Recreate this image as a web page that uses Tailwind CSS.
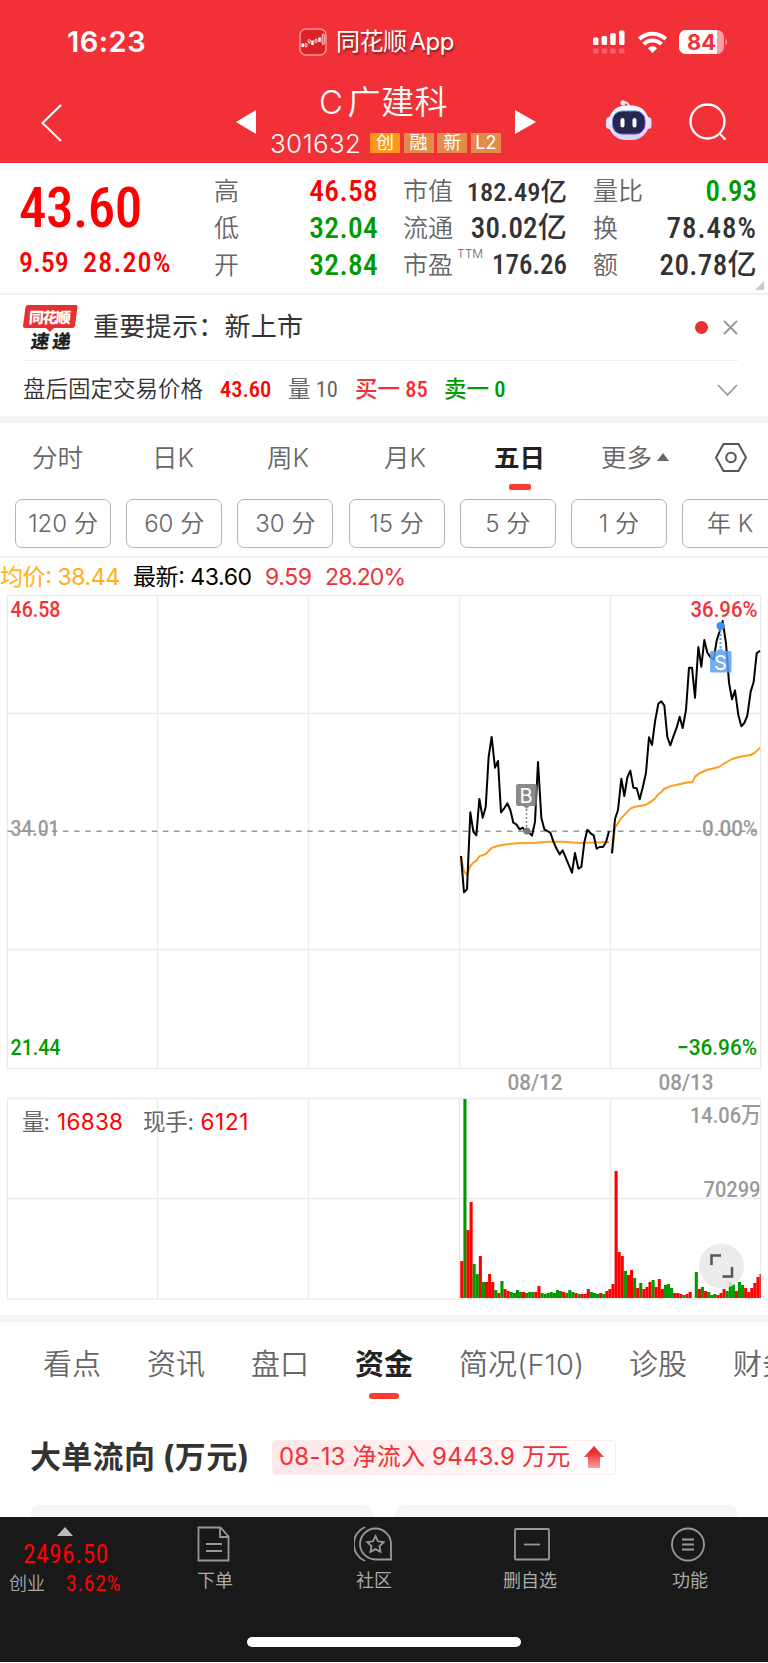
<!DOCTYPE html>
<html lang="zh-CN">
<head>
    <meta charset="UTF-8">
    <meta name="viewport" content="width=device-width, initial-scale=1.0">
    <title>C广建科 301632</title>
    <script src="https://cdn.jsdelivr.net/npm/@tailwindcss/browser@4"></script>
</head>
<body class="w-[768px] h-[1663px] overflow-hidden bg-white text-[#666] font-['Roboto','Noto_Sans_CJK_SC',sans-serif]">
    <!-- Header -->
    <header class="h-[163px] bg-[#f23037] text-white">
        <div class="h-[78px] pt-[6px] flex items-center relative">
            <div class="ml-[67px] w-[232px] font-['Inter'] font-semibold text-[29px] tracking-[0.5px]">16:23</div>
            <svg class="w-[28px] h-[28px]" viewBox="0 0 28 28" fill="none">
                <rect x="1" y="1" width="26" height="26" rx="6" fill="#dc2228" stroke="#ff9397" stroke-width="1.5"/>
                <path d="M3.800 15.500v3.500M13.500 12.500v4.500M20.500 9.500v4.500" stroke="#fff" stroke-width="2.500"/>
                <g stroke="#fff" stroke-width=".9"><rect x="6" y="15.500" width="2" height="3.500" rx="1"/><rect x="9.200" y="11.500" width="2" height="3.500" rx="1"/><rect x="16" y="11" width="2" height="3.500" rx="1"/><rect x="23.200" y="6" width="2" height="10.500" rx="1"/></g>
            </svg>
            <div class="ml-[9px] text-[24px] font-['Inter','Noto_Sans_CJK_SC',sans-serif] tracking-[-0.5px] whitespace-nowrap [text-shadow:1px_2px_2px_rgba(0,0,0,.45)]">同花顺<span class="ml-[3px]">App</span></div>
            <svg class="absolute left-[592px] top-[28px]" width="140" height="28" viewBox="0 0 140 28" fill="none">
                <g fill="#fff">
                    <rect x="1" y="9.500" width="5.500" height="7.500" rx="1.500"/><rect x="9.600" y="8" width="5.500" height="9" rx="1.500"/><rect x="18.200" y="5" width="5.500" height="12" rx="1.500"/><rect x="27" y="2.500" width="5.500" height="14.500" rx="1.500"/>
                    <g opacity=".25"><rect x="1" y="20.500" width="5.500" height="5" rx="1.500"/><rect x="9.600" y="20.500" width="5.500" height="5" rx="1.500"/><rect x="18.200" y="20.500" width="5.500" height="5" rx="1.500"/><rect x="27" y="20.500" width="5.500" height="5" rx="1.500"/></g>
                    <path d="M60.500 25l-4.600-4.800a6.500 6.500 0 0 1 9.200 0z"/>
                </g>
                <path d="M51.600 16.200a12.600 12.600 0 0 1 17.800 0M47.300 11a19 19 0 0 1 26.400 0" stroke="#fff" stroke-width="4"/>
                <rect x="87" y="2" width="45" height="24" rx="7" fill="#ff9da0"/>
                <path d="M94 2h31v24H94a7 7 0 0 1-7-7V9a7 7 0 0 1 7-7z" fill="#fff"/>
                <path d="M133.500 10.500a4.500 4.500 0 0 1 0 7z" fill="#ff9da0"/>
                <text x="95" y="21.800" font-family="Inter" font-weight="700" font-size="21.500" fill="#f23037" textLength="29" lengthAdjust="spacingAndGlyphs">84</text>
            </svg>
        </div>
        <div class="h-[85px] flex items-start">
            <svg class="ml-[40px] mt-[26px]" width="23" height="38" viewBox="0 0 23 38" fill="none" stroke="#fff" stroke-width="2"><path d="M21 1L2.500 19 21 37"/></svg>
            <svg class="ml-[172px] mt-[31px]" width="22" height="26" viewBox="0 0 22 26" fill="#fff"><path d="M21 1v24L1 13z"/></svg>
            <div class="ml-[13px] w-[244px] font-['Inter','Noto_Sans_CJK_SC',sans-serif]">
                <h1 class="mt-[5px] ml-[49px] text-[33px] leading-[38px] font-[350] tracking-[0.5px] whitespace-nowrap">C<span class="ml-[4px]">广建科</span></h1>
                <div class="mt-[8px] flex items-center h-[28px]">
                    <span class="w-[100px] text-[26px] tracking-[0.300px] font-[350]">301632</span>
                    <div class="flex gap-[3.600px] text-[18px] text-white leading-[20px] text-center">
                        <span class="w-[30px] h-[20px] bg-[#ff981a]">创</span>
                        <span class="w-[30px] h-[20px] bg-[#e38b48]">融</span>
                        <span class="w-[30px] h-[20px] bg-[#e38b48]">新</span>
                        <span class="w-[30px] h-[20px] bg-[#e38b48]">L2</span>
                    </div>
                </div>
            </div>
            <svg class="mt-[31px]" width="22" height="26" viewBox="0 0 22 26" fill="#fff"><path d="M1 1v24l21-12z"/></svg>
            <svg class="ml-[70px] mt-[21px]" width="46" height="44" viewBox="0 0 46 44">
                <defs>
                    <linearGradient id="shell" x2="0" y2="1"><stop offset="0" stop-color="#fff"/><stop offset="1" stop-color="#cfd3f5"/></linearGradient>
                    <linearGradient id="rim" x2="1" y2="1"><stop offset="0" stop-color="#4fc3ff"/><stop offset=".5" stop-color="#6b46df"/><stop offset="1" stop-color="#7a2cff"/></linearGradient>
                </defs>
                <circle cx="17" cy="3.800" r="2.600" fill="#e8e8fb"/><path d="M17 3.500q6-1 6 5" stroke="#e8e8fb" stroke-width="2" fill="none"/>
                <rect x="0" y="18" width="7" height="12" rx="3.500" fill="#dfe1fa"/><rect x="38.500" y="18" width="7" height="12" rx="3.500" fill="#dfe1fa"/>
                <rect x="2.500" y="6.500" width="40.500" height="34.500" rx="17" fill="url(#shell)"/>
                <rect x="6.500" y="12" width="32.500" height="23" rx="9.500" fill="#24284f" stroke="url(#rim)" stroke-width="1"/>
                <rect x="14.500" y="19" width="4" height="9.500" rx="2" fill="#fff"/><rect x="26.500" y="19" width="4" height="9.500" rx="2" fill="#fff"/>
            </svg>
            <svg class="ml-[36px] mt-[24px]" width="40" height="40" viewBox="0 0 40 40" fill="none" stroke="#fff" stroke-width="2.300"><circle cx="19.500" cy="19.500" r="17"/><path d="M31 31l6.500 6.500"/></svg>
        </div>
    </header>

    <!-- Quote -->
    <section class="h-[132px] border-b-2 border-[#f1f1f1] flex relative font-stretch-condensed">
        <div class="w-[214px] pl-[19px] text-[#f00] font-medium whitespace-nowrap">
            <div class="mt-[14px] text-[55px] leading-[62px] tracking-[-0.500px]">43.60</div>
            <div class="mt-[8px] text-[28px] leading-[32px] flex"><span class="w-[64px]">9.59</span><span class="tracking-[1.200px]">28.20%</span></div>
        </div>
        <div class="w-[164px] pt-[10px] text-[29.500px] leading-[37px] font-medium">
            <div class="flex justify-between"><span class="text-[25px] font-[350] text-[#666]">高</span><span class="text-[#f00] tracking-[0.300px]">46.58</span></div>
            <div class="flex justify-between"><span class="text-[25px] font-[350] text-[#666]">低</span><span class="text-[#090] tracking-[0.300px]">32.04</span></div>
            <div class="flex justify-between"><span class="text-[25px] font-[350] text-[#666]">开</span><span class="text-[#090] tracking-[0.300px]">32.84</span></div>
        </div>
        <div class="ml-[25px] w-[164px] pt-[10px] text-[29px] leading-[37px] font-medium text-[#333]">
            <div class="h-[37px] flex justify-between whitespace-nowrap"><span class="text-[25px] font-[350] text-[#666]">市值</span><span class="text-[26.500px]">182.49亿</span></div>
            <div class="h-[37px] flex justify-between whitespace-nowrap"><span class="text-[25px] font-[350] text-[#666]">流通</span><span class="tracking-[0.200px]">30.02亿</span></div>
            <div class="h-[37px] flex justify-between whitespace-nowrap"><span class="text-[25px] font-[350] text-[#666] relative">市盈<i class="absolute left-[54px] -top-[12px] not-italic text-[12px] font-['Inter']">TTM</i></span><span class="text-[27px]">176.26</span></div>
        </div>
        <div class="ml-[26px] w-[164px] pt-[10px] text-[29px] leading-[37px] font-medium text-[#333]">
            <div class="flex justify-between"><span class="text-[25px] font-[350] text-[#666]">量比</span><span class="text-[#090]">0.93</span></div>
            <div class="flex justify-between"><span class="text-[25px] font-[350] text-[#666]">换</span><span class="tracking-[1px]">78.48%</span></div>
            <div class="flex justify-between"><span class="text-[25px] font-[350] text-[#666]">额</span><span class="tracking-[0.400px]">20.78亿</span></div>
        </div>
        <svg class="absolute right-[4px] bottom-[3px]" width="9" height="9" viewBox="0 0 9 9" fill="#ccc"><path d="M9 0v9H0z"/></svg>
    </section>

    <!-- Notice -->
    <section class="mx-[23px] h-[65px] flex items-center text-[#333]">
        <svg class="overflow-visible" width="55" height="46" viewBox="0 0 55 46" font-family="Noto Sans CJK SC" font-weight="900">
            <path d="M5 0h48q2 0 1.500 2L52 21q-.5 2-2.500 2H31l-4 4-4-4H2q-2 0-2-2L2.500 2Q3 0 5 0z" fill="#e93030"/>
            <text transform="translate(5.500 17.500) skewX(-4)" font-size="15" fill="#fff" textLength="42">同花顺</text>
            <text transform="translate(7 43) skewX(-8)" font-size="18.500" fill="#222" textLength="40">速递</text>
        </svg>
        <div class="ml-[15px] text-[26px] tracking-[0.300px]">重要提示：新上市</div>
        <i class="ml-auto w-[13px] h-[13px] rounded-full bg-[#e93030]"></i>
        <svg class="ml-[15px] mr-[7px]" width="15" height="15" viewBox="0 0 15 15" stroke="#999" stroke-width="2"><path d="M1 1l13 13M14 1L1 14"/></svg>
    </section>
    <section class="h-[56px] ml-[23px] mr-[30px] pt-[3px] flex items-center text-[22.500px] whitespace-nowrap border-t border-[#eee] font-stretch-condensed">
        <span class="w-[197px] text-[#333] font-[350]">盘后固定交易价格</span>
        <span class="w-[68px] text-[#f00] font-medium">43.60</span>
        <span class="w-[67px]">量 10</span>
        <span class="w-[89px] text-[#f23037] font-medium">买一 85</span>
        <span class="text-[#090] font-medium">卖一 0</span>
        <svg class="ml-auto" width="21" height="12" viewBox="0 0 21 12" fill="none" stroke="#999" stroke-width="1.800"><path d="M1 1l9.500 10L20 1"/></svg>
    </section>

    <!-- Period tabs -->
    <nav class="h-[83px] border-t-[7px] border-[#f4f4f4] text-[25.500px] flex items-start pt-[16px] leading-[38px] whitespace-nowrap font-['Inter','Noto_Sans_CJK_SC',sans-serif] font-[350]">
        <span class="ml-[32px] w-[120px]">分时</span>
        <span class="w-[115px]">日K</span>
        <span class="w-[117px]">周K</span>
        <span class="w-[110px]">月K</span>
        <span class="w-[107px] font-bold text-[#222] relative">五日<i class="absolute left-[15px] top-[45px] w-[22px] h-[6px] rounded-[2px] bg-[#fb3a30]"></i></span>
        <span class="w-[56px]">更多</span>
        <svg class="mt-[14px]" width="12" height="8" viewBox="0 0 12 8" fill="#666"><path d="M6 0l6 8H0z"/></svg>
        <svg class="ml-[46px] mt-[4px]" width="32" height="29" viewBox="0 0 32 29" fill="none" stroke="#555" stroke-width="2"><path d="M8.500 1h15L31 14.500 23.500 28h-15L1 14.500z"/><circle cx="16" cy="14.500" r="4.800"/></svg>
    </nav>
    <div class="h-[59px] pl-[15px] flex gap-[15.200px] border-b-2 border-[#f1f1f1] text-[24px] font-[350] [word-spacing:-4px] font-['Inter','Noto_Sans_CJK_SC',sans-serif]">
        <button class="shrink-0 w-[96px] h-[49px] rounded-[7px] border border-[#b5b5b5]">120 分</button>
        <button class="shrink-0 w-[96px] h-[49px] rounded-[7px] border border-[#b5b5b5]">60 分</button>
        <button class="shrink-0 w-[96px] h-[49px] rounded-[7px] border border-[#b5b5b5]">30 分</button>
        <button class="shrink-0 w-[96px] h-[49px] rounded-[7px] border border-[#b5b5b5]">15 分</button>
        <button class="shrink-0 w-[96px] h-[49px] rounded-[7px] border border-[#b5b5b5]">5 分</button>
        <button class="shrink-0 w-[96px] h-[49px] rounded-[7px] border border-[#b5b5b5]">1 分</button>
        <button class="shrink-0 w-[96px] h-[49px] rounded-[7px] border border-[#b5b5b5]">年 K</button>
    </div>

    <!-- Charts, drawn in page units from y=558 to y=1315 -->
    <svg class="block" width="768" height="757" viewBox="0 558 768 757" fill="none" font-family="Roboto, 'Noto Sans CJK SC'" font-size="22.500">
        <g font-size="23" font-family="Inter, 'Noto Sans CJK SC'">
            <text x="0" y="585" fill="#ffae1a" textLength="120">均价: 38.44</text>
            <text x="133" y="585" fill="#000" textLength="119">最新: 43.60</text>
            <text x="265" y="585" fill="#f23037" textLength="47">9.59</text>
            <text x="325" y="585" fill="#f23037" textLength="81">28.20%</text>
        </g>
        <path d="M7.500 595.500h753V1068.500H7.500zM157.500 595.500v473M308.500 595.500v473M459.500 595.500v473M610.500 595.500v473M7.500 713.500h753M7.500 949.500h753M7.500 1098.500h753V1299H7.500zM157.500 1098.500v200M308.500 1098.500v200M459.500 1098.500v200M610.500 1098.500v200M7.500 1198.500h753" stroke="#ebebeb" stroke-width="1.300"/>
        <path d="M7.500 831.300h750" stroke="#999" stroke-width="1.500" stroke-dasharray="5.500 5.600"/>
        <g font-weight="500">
            <text x="10.500" y="616.500" fill="#f23037" textLength="50" lengthAdjust="spacingAndGlyphs">46.58</text>
            <text x="10.500" y="836" fill="#999" textLength="49" lengthAdjust="spacingAndGlyphs">34.01</text>
            <text x="10.500" y="1055" fill="#090" textLength="50" lengthAdjust="spacingAndGlyphs">21.44</text>
            <text x="690.500" y="616.500" fill="#f23037" textLength="67" lengthAdjust="spacingAndGlyphs">36.96%</text>
            <text x="702" y="836" fill="#999" textLength="56" lengthAdjust="spacingAndGlyphs">0.00%</text>
            <text x="677" y="1055" fill="#090" textLength="80" lengthAdjust="spacingAndGlyphs">−36.96%</text>
        </g>
        <g fill="#999" font-weight="500">
            <text x="507.500" y="1090" textLength="55" lengthAdjust="spacingAndGlyphs">08/12</text>
            <text x="658.500" y="1090" textLength="55" lengthAdjust="spacingAndGlyphs">08/13</text>
            <text x="690" y="1123" textLength="71" lengthAdjust="spacingAndGlyphs">14.06万</text>
            <text x="703.500" y="1197" textLength="57" lengthAdjust="spacingAndGlyphs">70299</text>
        </g>
        <g font-family="Inter, 'Noto Sans CJK SC'" font-size="22.500">
            <text x="22" y="1130" fill="#666" textLength="28">量:</text>
            <text x="57" y="1130" fill="#f00" textLength="66">16838</text>
            <text x="143" y="1130" fill="#666" textLength="51">现手:</text>
            <text x="200.500" y="1130" fill="#f00" textLength="48">6121</text>
        </g>
        <g stroke-width="2" stroke-linejoin="round">
            <path id="average" stroke="#ff9d1e"/>
            <path id="price" stroke="#000"/>
        </g>
        <g>
            <path d="M518 784h17q2 0 2 2v18q0 2-2 2h-5.500l-3 3-3-3H518q-2 0-2-2v-18q0-2 2-2z" fill="#777" fill-opacity=".85"/>
            <path d="M526.500 809v18" stroke="#888" stroke-width="1.500" stroke-dasharray="2 2"/>
            <circle cx="526.800" cy="831" r="3.500" fill="#777"/>
            <text x="519.500" y="802.500" fill="#fff" font-family="Inter" font-size="20">B</text>
            <circle cx="720.500" cy="626" r="4" fill="#3f8ef0"/>
            <path d="M720.500 630v20" stroke="#5c9ff0" stroke-width="2" stroke-dasharray="2 2"/>
            <path d="M711.500 651h5.500l3.500-3 3.500 3h6q1.500 0 1.500 1.500v18.500q0 1.500-1.500 1.500h-18.500q-1.500 0-1.500-1.500V652.500q0-1.500 1.500-1.500z" fill="#5b9ff2" fill-opacity=".85"/>
            <text x="714" y="669.500" fill="#fff" font-family="Inter" font-size="20">S</text>
        </g>
        <g id="volume"></g>
        <circle cx="721.500" cy="1266" r="22.500" fill="#e8e8e8" fill-opacity=".85"/>
        <path d="M711.500 1265v-9.500h9.500M732 1267v9.500h-9.500" stroke="#555" stroke-width="2.500"/>
    </svg>

    <!-- Info tabs -->
    <nav class="h-[105px] border-t-[7px] border-[#f4f4f4] flex items-start pt-[21px] text-[29px] leading-[44px] font-[350] whitespace-nowrap font-['Inter','Noto_Sans_CJK_SC',sans-serif]">
        <span class="ml-[43px] w-[104px] shrink-0">看点</span>
        <span class="w-[104px] shrink-0">资讯</span>
        <span class="w-[104px] shrink-0">盘口</span>
        <span class="w-[104px] shrink-0 font-bold text-[#222] relative">资金<i class="absolute left-[14px] top-[50px] w-[30px] h-[6px] rounded-[3px] bg-[#fb3a30]"></i></span>
        <span class="w-[170px] shrink-0 tracking-[0.100px]">简况(F10)</span>
        <span class="w-[104px] shrink-0">诊股</span>
        <span class="shrink-0">财务</span>
    </nav>
    <div class="h-[74px] pl-[30px] flex items-center font-['Inter','Noto_Sans_CJK_SC',sans-serif]">
        <h2 class="w-[242px] text-[31px] font-bold text-[#333] tracking-[0.300px] whitespace-nowrap">大单流向 (万元)</h2>
        <div class="w-[344px] h-[35px] px-[6px] flex items-center rounded-[4px] border border-[#fdecec] bg-linear-to-r from-[#fde6e7] to-white text-[24px] text-[#f23037] whitespace-nowrap">
            <span class="w-[305px] tracking-[0.200px]">08-13 净流入 9443.9 万元</span>
            <svg width="20" height="24" viewBox="0 0 20 24">
                <defs><linearGradient id="up" x2="0" y2="1"><stop offset=".3" stop-color="#e93030"/><stop offset="1" stop-color="#f9a0a0"/></linearGradient></defs>
                <path d="M10 1l10 11h-4v11H4V12H0z" fill="url(#up)"/>
            </svg>
        </div>
    </div>
    <div class="h-[23px] px-[30px] pt-[11px] grid grid-cols-2 gap-[22px]">
        <div class="rounded-t-[10px] bg-[#f5f5f5]"></div>
        <div class="rounded-t-[10px] bg-[#f5f5f5]"></div>
    </div>

    <!-- Bottom bar -->
    <footer class="h-[145px] bg-[#191919] text-[18px] text-[#aaa] relative flex">
        <div class="w-[130px] pt-[10px] font-stretch-condensed">
            <svg class="ml-[57px]" width="16" height="9" viewBox="0 0 16 9" fill="#bbb"><path d="M8 0l8 9H0z"/></svg>
            <div class="mt-[5px] w-[132px] text-center text-[25px] leading-[28px] tracking-[0.700px] font-[450] text-[#f00]">2496.50</div>
            <div class="mt-[1px] pl-[9px] flex leading-[28px]"><span class="w-[57px] font-[350]">创业</span><span class="text-[22px] tracking-[0.600px] font-[450] text-[#f00]">3.62%</span></div>
        </div>
        <div class="w-[170px] pt-[9px] flex flex-col items-center">
            <svg class="mr-[3px]" width="34" height="36" viewBox="0 0 34 36" fill="none" stroke="#999" stroke-width="1.800"><path d="M1.500 1.500h22l8 9v24h-30zM23 1.500v9.500h8M9 18h16M9 25h16"/></svg>
            <span class="mt-[5px] leading-[28px]">下单</span>
        </div>
        <div class="w-[148px] pt-[9px] flex flex-col items-center">
            <svg class="mr-[2px]" width="38" height="36" viewBox="0 0 38 36" fill="none" stroke="#999" stroke-width="1.800"><path d="M37 33.500H21.500A15.500 15.500 0 1 1 37 18zM11 1A18.500 18.500 0 0 0 11 35"/><path d="M21.500 10l2.500 5.300 5.700.8-4.200 4 1 5.800-5-2.800-5 2.800 1-5.800-4.200-4 5.700-.8z"/></svg>
            <span class="mt-[5px] leading-[28px]">社区</span>
        </div>
        <div class="w-[164px] pt-[9px] flex flex-col items-center">
            <svg class="ml-[4px]" width="36" height="36" viewBox="0 0 36 36" fill="none" stroke="#999" stroke-width="1.800"><rect x="1" y="3" width="34" height="30.500" rx="1"/><path d="M10 18.500h16"/></svg>
            <span class="mt-[5px] leading-[28px]">删自选</span>
        </div>
        <div class="w-[156px] pt-[9px] flex flex-col items-center">
            <svg class="mr-[4px]" width="36" height="36" viewBox="0 0 36 36" fill="none" stroke="#999" stroke-width="1.800"><circle cx="18" cy="18.500" r="16"/><path d="M12 13.500h12M12 18.500h12M12 23.500h12"/></svg>
            <span class="mt-[5px] leading-[28px]">功能</span>
        </div>
        <i class="absolute left-[247px] top-[120px] w-[274px] h-[10px] rounded-full bg-white"></i>
    </footer>

    <script>
        // lines for the two trading days, x/y in thirds of a pixel from (440, 590)
        const price = [
            [[63,798],[72,907],[81,898],[91,667],[100,725],[109,736],[118,627],[128,683],[137,652],[146,500],[155,441],[165,533],[174,513],[183,667],[192,656],[202,640],[211,660],[220,698],[229,703],[239,718],[248,713],[257,725],[267,728],[276,737],[285,695],[294,516],[304,683],[313,718],[331,728],[340,754],[349,775],[359,793],[368,781],[396,848],[405,789],[415,836],[424,831],[433,757],[442,719],[452,730],[461,736],[470,776],[479,771],[489,771],[498,757],[507,724]],
            [[516,790],[525,687],[534,660],[544,566],[553,618],[562,562],[571,542],[580,593],[590,595],[599,628],[608,593],[618,548],[627,442],[636,465],[645,395],[655,341],[664,334],[673,347],[682,441],[691,466],[700,440],[710,413],[719,380],[728,414],[738,360],[747,233],[756,233],[765,323],[775,171],[784,230],[793,150],[802,188],[812,202],[821,208],[830,152],[839,124],[848,93],[858,160],[867,278],[876,328],[885,301],[895,375],[904,409],[913,399],[922,377],[932,305],[941,276],[950,190],[960,182]]
        ];
        const average = [
            [[63,798],[72,845],[81,854],[91,828],[100,818],[109,812],[118,799],[137,792],[155,774],[172,768],[192,764],[230,760],[285,758],[330,755],[370,755],[420,759],[507,756]],
            [[516,790],[525,712],[532,703],[543,685],[560,668],[571,656],[582,651],[612,646],[625,640],[645,626],[653,615],[663,607],[672,597],[690,589],[745,577],[757,577],[765,560],[780,549],[800,540],[837,531],[850,522],[876,507],[900,500],[932,495],[945,488],[960,473]]
        ];
        const toPath = days => days.map(day =>
            'M' + day.map(([x, y]) => `${440 + x / 3} ${590 + y / 3}`).join('L')).join('');
        document.getElementById('price').setAttribute('d', toPath(price));
        document.getElementById('average').setAttribute('d', toPath(average));

        // volume bars: colour + height
        const bars = 'r37 g199 r68 r96 g34 g24 r42 g16 r16 r24 r16 g8 r5 g17 r9 r7 g6 g5 g8 g6 r6 g5 g6 g6 r6 r12 g5 g4 g5 g6 g5 g8 g7 r6 g5 g8 g6 r5 g4 r4 r4 r9 g6 g5 g4 r5 g4 r7 r9 r14 r127 r46 r42 g27 r23 r28 g20 r10 g15 r9 r11 r16 g18 r11 r19 r9 g13 g14 g10 r5 r5 r4 g3 r4 r6 n0 g26 r9 g11 r7 g6 g3 g4 r3 r5 r9 g7 g16 g14 r7 g16 g13 r10 r6 r10 r15 r21 r24'.split(' ');
        const colors = { r: '#f00', g: '#090', n: 'none' };
        document.getElementById('volume').innerHTML = bars.map((bar, i) => {
            const x = 460.3 + i * 3.085;
            const h = Number(bar.slice(1));
            return `<rect x="${x}" y="${1298 - h}" width="${Math.min(3.1, 760.8 - x)}" height="${h}" fill="${colors[bar[0]]}"/>`;
        }).join('');
    </script>
</body>
</html>
